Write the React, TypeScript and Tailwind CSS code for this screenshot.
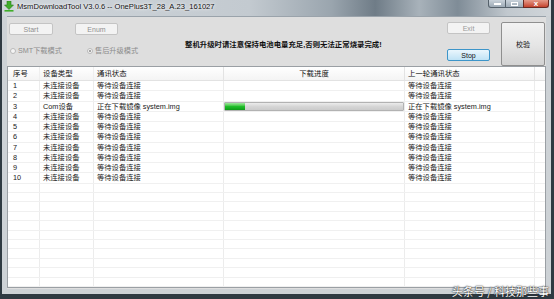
const FONT = "font-['Liberation_Sans','Noto_Sans_CJK_SC',sans-serif]"

type Row = { no: number; type: string; status: string; progress: number; last: string }

const ROWS: Row[] = Array.from({ length: 10 }, (_, i) => {
  if (i === 2) {
    return { no: 3, type: 'Com设备', status: '正在下载镜像 system.img', progress: 11.3, last: '正在下载镜像 system.img' }
  }
  return { no: i + 1, type: '未连接设备', status: '等待设备连接', progress: -1, last: '等待设备连接' }
})

const COLS = ['w-[32px]', 'w-[54px]', 'w-[130px]', 'w-[181px]', 'w-[130px]', 'flex-1']

function Btn({ label, className }: { label: string; className: string }) {
  return (
    <div
      className={`flex items-center justify-center rounded-[2px] border text-[7px] leading-none ${className}`}
    >
      {label}
    </div>
  )
}

function Radio({ checked, label }: { checked: boolean; label: string }) {
  return (
    <div className="flex items-center gap-[2px] text-[7.2px] leading-none text-[#8d8d8d]">
      <div className="flex h-[6px] w-[6px] items-center justify-center rounded-full border border-[#b9b9b9] bg-[#f4f4f4]">
        {checked && <div className="h-[2px] w-[2px] rounded-full bg-[#8a8a8a]" />}
      </div>
      <span>{label}</span>
    </div>
  )
}

function GridRow({ row }: { row?: Row }) {
  return (
    <div className="flex h-[10.25px] border-b border-[#f0f0f0] text-[7.3px] leading-[10px] text-[#1a1a1a]">
      <div className={`${COLS[0]} border-r border-[#ececec] pl-[5px]`}>{row?.no}</div>
      <div className={`${COLS[1]} border-r border-[#ececec] pl-[3px]`}>{row?.type}</div>
      <div className={`${COLS[2]} border-r border-[#ececec] pl-[3px] whitespace-nowrap`}>{row?.status}</div>
      <div className={`${COLS[3]} flex border-r border-[#ececec]`}>
        {row && row.progress >= 0 && (
          <div className="flex h-full w-full rounded-[1px] border border-[#b2b2b2] bg-gradient-to-b from-[#ececec] via-[#d6d6d6] to-[#cbcbcb]">
            <div
              className="h-full bg-gradient-to-b from-[#9be79b] via-[#1fbf2a] to-[#0e9a18]"
              style={{ width: `${row.progress}%` }}
            />
          </div>
        )}
      </div>
      <div className={`${COLS[4]} border-r border-[#ececec] pl-[3px] whitespace-nowrap`}>{row?.last}</div>
      <div className={COLS[5]} />
    </div>
  )
}

export default function App() {
  return (
    <div className={`relative flex h-[299px] w-[554px] overflow-hidden bg-[#2f3a42] ${FONT}`}>
      <div className="ml-[2px] flex h-[294px] w-[549px] flex-col bg-[#cdd2d6]">
        {/* title bar */}
        <div className="flex h-[16px] items-start bg-[linear-gradient(90deg,#cfd5da_0%,#c3cad0_45%,#9aa5ae_60%,#6f7c87_68%,#a8b2ba_76%,#7f8c97_83%,#c1c8ce_92%,#d0d5d9_100%)]">
          <svg width="10" height="11" viewBox="0 0 10 11" className="ml-[2px] mt-[1px]">
            <path d="M3 0h4v4h2.5L5 8.5 0.5 4H3z" fill="#3fae2a" stroke="#2a7d1c" strokeWidth="0.6" />
            <rect x="0.5" y="9" width="9" height="1.6" fill="#3fae2a" />
          </svg>
          <span className="ml-[3px] mt-[1px] text-[7.6px] leading-[11px] text-[#111] [text-shadow:0_0_4px_#fff,0_0_2px_#fff]">
            MsmDownloadTool V3.0.6 -- OnePlus3T_28_A.23_161027
          </span>
          <div className="flex-1" />
          <div className="mr-[2px] flex h-[8px]">
            <div className="flex w-[18px] items-end justify-center rounded-bl-[3px] border border-t-0 border-[#55616b] bg-gradient-to-b from-[#c9d2da] to-[#9eabb6] pb-[2px]">
              <div className="h-[2px] w-[7px] bg-white" />
            </div>
            <div className="flex w-[17px] items-center justify-center border-b border-[#55616b] bg-gradient-to-b from-[#c9d2da] to-[#9eabb6]">
              <div className="h-[4px] w-[7px] border border-white" />
            </div>
            <div className="flex w-[26px] items-center justify-center rounded-br-[3px] border border-t-0 border-[#6b2a22] bg-gradient-to-b from-[#e49a8a] to-[#c4412c] text-[8px] font-bold leading-none text-white">
              x
            </div>
          </div>
        </div>

        {/* client area */}
        <div className="mx-[5px] flex flex-1 flex-col border-t border-[#9aa3ab] bg-[#dedede]">
          <div className="flex h-[49px]">
            <div className="flex w-[178px] flex-col">
              <div className="mt-[6px] flex">
                <Btn label="Start" className="ml-[2px] h-[12px] w-[44px] border-[#c4c4c4] bg-[#f3f3f3] text-[#8f8f8f]" />
                <Btn label="Enum" className="ml-[22px] h-[12px] w-[43px] border-[#c4c4c4] bg-[#f3f3f3] text-[#8f8f8f]" />
              </div>
              <div className="ml-[3px] mt-[12px] flex gap-[25px]">
                <Radio checked={false} label="SMT下载模式" />
                <Radio checked label="售后升级模式" />
              </div>
            </div>
            <div className="flex-1 pt-[23px] text-[7.4px] font-bold leading-[10px] text-[#111]">
              整机升级时请注意保持电池电量充足,否则无法正常烧录完成!
            </div>
            <div className="flex w-[43px] flex-col">
              <Btn label="Exit" className="mt-[5px] h-[12px] w-[43px] border-[#c4c4c4] bg-[#f3f3f3] text-[#9a9a9a]" />
              <Btn label="Stop" className="mt-[15px] h-[12px] w-[43px] border-[#3d95c9] bg-gradient-to-b from-[#eaf6fd] to-[#bfe2f5] text-[#111]" />
            </div>
            <Btn
              label="校验"
              className="ml-[11px] mr-[1px] mt-[5px] h-[44px] w-[44px] border-[#8f8f8f] bg-gradient-to-b from-[#f2f2f2] via-[#e6e6e6] to-[#d3d3d3] text-[7.4px] text-[#111]"
            />
          </div>

          {/* table */}
          <div className="flex h-[222px] flex-col overflow-hidden border border-[#9a9fa4] bg-white">
            <div className="flex h-[14px] border-b border-[#e2e2e2] bg-gradient-to-b from-white to-[#f4f4f4] text-[7.4px] leading-[13px] text-[#111]">
              <div className={`${COLS[0]} border-r border-[#efefef] pl-[5px]`}>序号</div>
              <div className={`${COLS[1]} border-r border-[#efefef] pl-[3px]`}>设备类型</div>
              <div className={`${COLS[2]} border-r border-[#e3e3e3] pl-[3px]`}>通讯状态</div>
              <div className={`${COLS[3]} border-r border-[#e3e3e3] text-center`}>下载进度</div>
              <div className={`${COLS[4]} border-r border-[#e3e3e3] pl-[3px]`}>上一轮通讯状态</div>
              <div className={COLS[5]} />
            </div>
            {ROWS.map((r) => (
              <GridRow key={r.no} row={r} />
            ))}
            {Array.from({ length: 11 }, (_, i) => (
              <GridRow key={`e${i}`} />
            ))}
          </div>
        </div>
        <div className="h-[5px]" />
      </div>

      <div className="absolute bottom-[1px] right-[5px] text-[11px] leading-[14px] text-white [text-shadow:0_0_2px_#333,0_0_1px_#000] font-['Noto_Sans_CJK_SC',sans-serif]">
        头条号 / 科技那些事
      </div>
    </div>
  )
}
